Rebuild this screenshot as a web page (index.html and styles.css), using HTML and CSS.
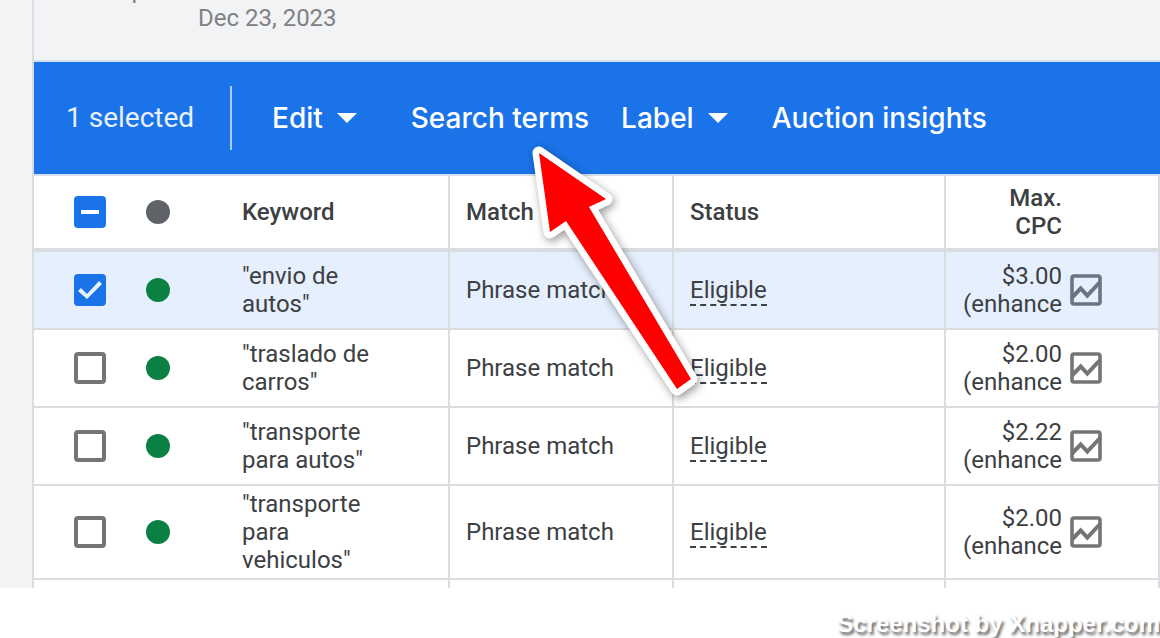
FILE: index.html
```html
<!DOCTYPE html>
<html lang="en">
<head>
<meta charset="utf-8">
<title>Search keywords</title>
<link rel="stylesheet" href="styles.css">
</head>
<body>
<svg class="defs" aria-hidden="true">
  <symbol id="chart" viewBox="0 0 32 32">
    <rect x="2" y="2" width="28" height="28" rx="2" fill="none" stroke="currentColor" stroke-width="3.600"/>
    <path d="M2 23.500 10.700 14.500 17.300 21.500 30.500 7.500" fill="none" stroke="currentColor" stroke-width="4"/>
  </symbol>
</svg>
<div class="frame">
  <main class="panel">
    <header class="summary">
      <p class="dates"><span class="status-note">Updated</span><span>Dec 23, 2023</span></p>
    </header>
    <div class="toolbar" role="toolbar" aria-label="Selected keywords">
      <span class="count">1 selected</span>
      <button class="action menu edit" type="button">Edit</button>
      <button class="action" type="button">Search terms</button>
      <button class="action menu" type="button">Label</button>
      <button class="action insights" type="button">Auction insights</button>
    </div>
    <table class="keywords">
      <colgroup><col class="c-check"><col class="c-dot"><col class="c-key"><col class="c-match"><col class="c-status"><col class="c-cpc"></colgroup>
      <thead>
        <tr>
          <th class="check"><input class="box mixed" type="checkbox" aria-label="Select all"></th>
          <th class="state"><span class="dot all"></span></th>
          <th class="key">Keyword</th>
          <th>Match</th>
          <th>Status</th>
          <th class="cpc"><div class="bid"><span class="amount">Max. CPC</span></div></th>
        </tr>
      </thead>
      <tbody>
        <tr class="selected">
          <td class="check"><input class="box" type="checkbox" checked aria-label="envio de autos"></td>
          <td class="state"><span class="dot"></span></td>
          <td class="key"><div class="phrase">"envio de autos"</div></td>
          <td>Phrase match</td>
          <td><span class="eligible">Eligible</span></td>
          <td class="cpc"><div class="bid"><span class="amount">$3.00 (enhance</span><svg class="chart"><use href="#chart"/></svg></div></td>
        </tr>
        <tr>
          <td class="check"><input class="box" type="checkbox" aria-label="traslado de carros"></td>
          <td class="state"><span class="dot"></span></td>
          <td class="key"><div class="phrase">"traslado de carros"</div></td>
          <td>Phrase match</td>
          <td><span class="eligible">Eligible</span></td>
          <td class="cpc"><div class="bid"><span class="amount">$2.00 (enhance</span><svg class="chart"><use href="#chart"/></svg></div></td>
        </tr>
        <tr>
          <td class="check"><input class="box" type="checkbox" aria-label="transporte para autos"></td>
          <td class="state"><span class="dot"></span></td>
          <td class="key"><div class="phrase">"transporte para autos"</div></td>
          <td>Phrase match</td>
          <td><span class="eligible">Eligible</span></td>
          <td class="cpc"><div class="bid"><span class="amount">$2.22 (enhance</span><svg class="chart"><use href="#chart"/></svg></div></td>
        </tr>
        <tr>
          <td class="check"><input class="box" type="checkbox" aria-label="transporte para vehiculos"></td>
          <td class="state"><span class="dot"></span></td>
          <td class="key"><div class="phrase">"transporte para vehiculos"</div></td>
          <td>Phrase match</td>
          <td><span class="eligible">Eligible</span></td>
          <td class="cpc"><div class="bid"><span class="amount">$2.00 (enhance</span><svg class="chart"><use href="#chart"/></svg></div></td>
        </tr>
        <tr class="next"><td></td><td></td><td class="key"></td><td></td><td></td><td></td></tr>
      </tbody>
    </table>
  </main>
  <svg class="arrow" viewBox="520 130 200 280" aria-hidden="true">
    <path d="M539 153 606 199 589 207 691 379 677 389 566 221 550 232Z" fill="#f00" stroke="#fff" stroke-width="13" stroke-linejoin="round"/>
    <path d="M539 153 606 199 589 207 691 379 677 389 566 221 550 232Z" fill="#f00"/>
  </svg>
</div>
<footer class="credit">Screenshot by Xnapper.com</footer>
</body>
</html>
```
FILE: styles.css
```css
* { box-sizing: border-box; }
body {
  margin: 0;
  background: #fff;
  color: #3c4043;
  font: 24px/28px Roboto, "Liberation Sans", sans-serif;
  overflow: hidden;
}
.defs { display: none; }
.frame {
  position: relative;
  padding-left: 32px;
  background: #f3f3f3;
}
.panel { border-left: 2px solid #dadce0; background: #fff; }
.summary {
  height: 62px;
  overflow: hidden;
  border-bottom: 2px solid #d2dff0;
  background: #f1f3f4;
  color: #808184;
}
.dates {
  display: flex;
  flex-direction: column;
  margin: -24px 0 0;
  padding-left: 164px;
}
.status-note { margin-left: -82px; }
.toolbar {
  display: flex;
  align-items: center;
  height: 114px;
  padding-left: 32px;
  border-bottom: 2px solid #d6e0f0;
  background: #1a73e8;
  color: #fff;
  font-size: 28px;
}
.count {
  width: 166px;
  border-right: 2px solid #a9caf6;
  line-height: 64px;
  color: #e8f0fe;
}
.action {
  margin: 0 32px 0 0;
  padding: 0;
  border: 0;
  background: none;
  color: inherit;
  font: 500 28px/36px Inter, Roboto, sans-serif;
}
.menu { display: flex; align-items: center; gap: 14px; }
.menu::after {
  content: "";
  border: 10px solid transparent;
  border-top-color: #fff;
  border-bottom: 0;
}
.edit { margin: 0 54px 0 40px; }
.insights { margin-left: 12px; }
.keywords {
  width: 100%;
  table-layout: fixed;
  border-collapse: separate;
  border-spacing: 0;
}
.c-check { width: 88px; }
.c-dot { width: 96px; }
.c-key { width: 232px; }
.c-match { width: 224px; }
.c-status { width: 272px; }
th, td {
  height: 78px;
  padding: 4px 0 4px 16px;
  border: 0 solid #dadce0;
  border-width: 0 2px 2px 0;
  text-align: left;
  vertical-align: middle;
}
th {
  height: 76px;
  border-bottom-width: 4px;
  font-weight: 500;
}
.key { padding-left: 24px; }
.check { padding: 0 0 0 40px; border-right: 0; }
.state { padding: 0 0 0 24px; border-right: 0; }
.phrase { width: 150px; }
.selected td { background: #e6effd; }
.next td { height: 8px; padding: 0; border-bottom: 0; }
.next td:nth-child(-n+2) { border-right: 0; }
.box {
  display: block;
  appearance: none;
  width: 32px;
  height: 32px;
  margin: 0;
  border: 4px solid #757575;
  border-radius: 4px;
}
.box:checked, .mixed { border-color: #1a73e8; background: #1a73e8; }
.mixed::before {
  content: "";
  display: block;
  width: 18px;
  height: 4px;
  margin: 10px 3px;
  background: #fff;
}
.box:checked::before {
  content: "";
  display: block;
  width: 24px;
  height: 24px;
  background: #e8f3fe;
  clip-path: polygon(0 13px, 3px 10px, 9px 16px, 21px 3px, 24px 6px, 9px 21px);
}
.dot {
  display: block;
  width: 24px;
  height: 24px;
  border-radius: 50%;
  background: #0b8043;
}
.all { background: #5f6368; }
.eligible {
  display: block;
  width: max-content;
  margin-top: 2px;
  border-bottom: 2px dashed #3c4043;
}
.bid { display: flex; align-items: center; gap: 8px; }
.amount { width: 100px; text-align: right; }
.chart { width: 32px; height: 32px; color: #757575; }
.selected .chart { color: #6b7480; }
.arrow {
  position: absolute;
  left: 520px;
  top: 130px;
  width: 200px;
  height: 280px;
  filter: drop-shadow(2px 3px 4px rgba(0, 0, 0, .4));
}
.credit {
  padding-top: 22px;
  color: #fff;
  font: 700 24px/28px "Liberation Sans", sans-serif;
  text-align: right;
  text-shadow: 2px 3px 3px #666;
}
```
